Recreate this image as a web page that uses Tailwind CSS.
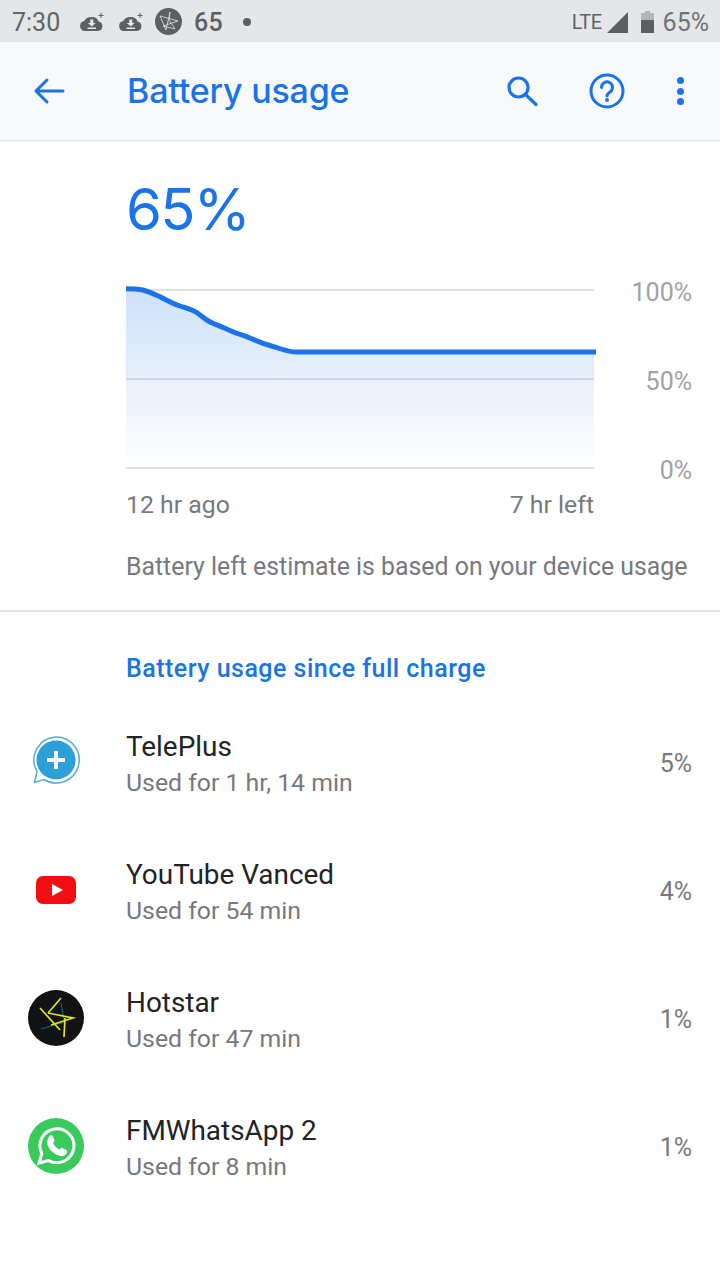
<!DOCTYPE html>
<html>
<head>
<meta charset="utf-8">
<script src="https://cdn.jsdelivr.net/npm/@tailwindcss/browser@4"></script>
</head>
<body class="m-0 bg-white">
<div class="w-[720px] h-[1280px] overflow-hidden bg-white font-['Roboto',sans-serif] flex flex-col">
  <!-- status bar -->
  <div class="h-[42px] bg-[#e5e6e9] flex items-center justify-between pl-[12px] pr-[11px] pt-[2px] shrink-0">
    <div class="flex items-center">
      <span class="text-[25px] leading-none w-[67px] text-[#616468]">7:30</span>
      <svg class="w-[26px] h-[22px] mr-[13px]" viewBox="0 0 26 22"><path fill="#5c5f63" d="M6 20a5 5 0 0 1-.8-9.900A8 7 0 0 1 13 6a7 6 0 0 1 6.500 4.500A4.800 4.800 0 0 1 19 20Z"/><path fill="#e5e6e9" d="M11.200 8.500h3.100v3.500h2.400l-3.950 3.600-3.950-3.600h2.400ZM8.500 16.500h8.500v1.500H8.500Z"/><path fill="none" stroke="#5c5f63" stroke-width="1" d="M22 2v5M19.500 4.500h5"/></svg>
      <svg class="w-[26px] h-[22px] mr-[11px]" viewBox="0 0 26 22"><path fill="#5c5f63" d="M6 20a5 5 0 0 1-.8-9.900A8 7 0 0 1 13 6a7 6 0 0 1 6.500 4.500A4.800 4.800 0 0 1 19 20Z"/><path fill="#e5e6e9" d="M11.200 8.500h3.100v3.500h2.400l-3.950 3.600-3.950-3.600h2.400ZM8.500 16.500h8.500v1.500H8.500Z"/><path fill="none" stroke="#5c5f63" stroke-width="1" d="M22 2v5M19.500 4.500h5"/></svg>
      <svg class="w-[27px] h-[27px] mr-[12px] -mt-[2px]" viewBox="0 0 27 27"><circle cx="13.500" cy="13.500" r="13.500" fill="#5c5f63"/><path fill="none" stroke="#d4d5d8" stroke-width="0.900" d="M15 4 L11 22 L5 8 L23 13 L8 18 L20 21 L14 12 Z"/></svg>
      <span class="text-[25px] leading-none font-medium text-[#5c5f63] tracking-[0.2px] w-[49px]">65</span>
      <span class="w-[8px] h-[8px] rounded-full bg-[#5c5f63]"></span>
    </div>
    <div class="flex items-center">
      <span class="text-[20px] leading-none text-[#5f6368] tracking-[-0.5px] mr-[5px]">LTE</span>
      <svg class="w-[21px] h-[21px] mr-[13px]" viewBox="0 0 21 21"><path fill="#5c5f63" d="M21 0v21H0Z"/></svg>
      <svg class="w-[13px] h-[22px] mr-[9px]" viewBox="0 0 13 22"><path fill="#b4b5b8" d="M4 0h5v2h4v7H0V2h4Z"/><path fill="#5c5f63" d="M0 9h13v13H0Z"/></svg>
      <span class="text-[25px] leading-none text-[#6f7276]">65%</span>
    </div>
  </div>
  <!-- app bar -->
  <div class="h-[98px] bg-[#f8f9fb] flex items-center shrink-0 shadow-[0_1px_2px_rgba(0,0,0,0.15)] relative">
    <svg class="w-[32px] h-[32px] ml-[33px]" viewBox="0 0 32 32"><path fill="none" stroke="#1a73e8" stroke-width="3" stroke-linecap="round" stroke-linejoin="round" d="M3 16h27M14 5 3 16l11 11"/></svg>
    <span class="text-[34px] leading-none text-[#1a73e8] font-medium ml-[62px] tracking-[-0.2px] font-['Inter',sans-serif]">Battery usage</span>
    <svg class="w-[34px] h-[34px] ml-auto" viewBox="0 0 34 34"><circle cx="13.500" cy="13.500" r="9.500" fill="none" stroke="#1a73e8" stroke-width="3.200"/><path stroke="#1a73e8" stroke-width="3.200" stroke-linecap="round" d="M20.500 20.500 31 30.500"/></svg>
    <svg class="w-[36px] h-[36px] ml-[50px]" viewBox="0 0 36 36"><circle cx="18" cy="18" r="16" fill="none" stroke="#1a73e8" stroke-width="3"/><path fill="none" stroke="#1a73e8" stroke-width="3" stroke-linecap="round" d="M12.500 14.500a5.500 5.500 0 1 1 8.500 4.500c-2 1.500-3 2-3 4"/><circle cx="18" cy="27" r="2" fill="#1a73e8"/></svg>
    <div class="flex flex-col gap-[3.500px] ml-[52px] mr-[36px]">
      <span class="block w-[7px] h-[7px] rounded-full bg-[#1a73e8]"></span>
      <span class="block w-[7px] h-[7px] rounded-full bg-[#1a73e8]"></span>
      <span class="block w-[7px] h-[7px] rounded-full bg-[#1a73e8]"></span>
    </div>
  </div>
  <!-- battery -->
  <div class="pl-[126px] pr-[28px] h-[472px] shrink-0 border-b-2 border-[#e4e5e6] flex flex-col">
    <div class="text-[58px] leading-none text-[#1a73e8] mt-[40px] font-['Inter',sans-serif] font-normal tracking-[-1.700px]">65%</div>
    <div class="flex mt-[43px] items-start">
      <svg class="w-[472px] h-[190px] shrink-0" viewBox="0 0 472 190">
        <defs><linearGradient id="g" x1="0" y1="0" x2="0" y2="1"><stop offset="0" stop-color="#cfe1f9"/><stop offset="1" stop-color="#ffffff"/></linearGradient></defs>
        <path fill="url(#g)" d="M0 7.700C8 7.700 12 8 17 9C24 11 28 13 34 15.700C42 20 48 23 54 25C60 27 66 28.500 71 31.700C77 36 80 39.500 87 42.300C95 45 102 49.500 111 52.300C117 54 122 56 127 58.300C133 61 138 63 147 65.500C155 67.500 161 71 170 71H468V187H0Z"/>
        <rect x="0" y="8" width="468" height="2" fill="#e0e1e2"/>
        <rect x="0" y="97" width="468" height="2" fill="#d2d6e2"/>
        <rect x="0" y="186" width="468" height="2" fill="#e0e1e2"/>
        <path fill="none" stroke="#1a73e8" stroke-width="5" d="M0 7.700C8 7.700 12 8 17 9C24 11 28 13 34 15.700C42 20 48 23 54 25C60 27 66 28.500 71 31.700C77 36 80 39.500 87 42.300C95 45 102 49.500 111 52.300C117 54 122 56 127 58.300C133 61 138 63 147 65.500C155 67.500 161 71 170 71H470"/>
      </svg>
      <div class="relative flex-1 h-[190px] text-[25px] leading-none text-[#a0a2a5]">
        <span class="absolute right-0 top-[-1px]">100%</span>
        <span class="absolute right-0 top-[88px]">50%</span>
        <span class="absolute right-0 top-[177px]">0%</span>
      </div>
    </div>
    <div class="flex justify-between w-[468px] text-[24.800px] leading-none text-[#77797c] mt-[22px]">
      <span>12 hr ago</span><span>7 hr left</span>
    </div>
    <div class="text-[24.850px] leading-none text-[#77797c] mt-[37px] whitespace-nowrap">Battery left estimate is based on your device usage</div>
  </div>
  <!-- list -->
  <div class="flex flex-col">
    <div class="pl-[126px] text-[25px] leading-none text-[#1a73e8] font-medium h-[87px] pt-[44px] tracking-[0.48px]">Battery usage since full charge</div>
    <div class="h-[128px] flex items-center pl-[28px] pr-[28px]">
      <div class="w-[98px] shrink-0 -mt-[5px]">
        <svg class="w-[56px] h-[52px]" viewBox="0 0 56 52"><path fill="#fff" stroke="#54aed8" stroke-width="1.500" d="M28 2a23 23 0 1 1-12 42.500L6.500 47.500 9 36.500A23 23 0 0 1 28 2Z"/><circle cx="28" cy="25" r="19.500" fill="#2c9fd9"/><path stroke="#fff" stroke-width="4" d="M19 25h18M28 16v18"/></svg>
      </div>
      <div class="flex-1 pt-[3px]"><div class="text-[27.900px] leading-none text-[#212326]">TelePlus</div><div class="text-[24.800px] leading-none text-[#77797c] mt-[10px]">Used for 1 hr, 14 min</div></div>
      <div class="text-[25px] leading-none text-[#77797c]">5%</div>
    </div>
    <div class="h-[128px] flex items-center pl-[28px] pr-[28px]">
      <div class="w-[98px] shrink-0 -mt-[3px] pl-[8px]">
        <svg class="w-[40px] h-[28px]" viewBox="0 0 40 28"><rect width="40" height="28" rx="7" fill="#f40d12"/><path fill="#fff" d="M16 8l11 6-11 6Z"/></svg>
      </div>
      <div class="flex-1 pt-[3px]"><div class="text-[27.900px] leading-none text-[#212326]">YouTube Vanced</div><div class="text-[24.800px] leading-none text-[#77797c] mt-[10px]">Used for 54 min</div></div>
      <div class="text-[25px] leading-none text-[#77797c]">4%</div>
    </div>
    <div class="h-[128px] flex items-center pl-[28px] pr-[28px]">
      <div class="w-[98px] shrink-0 -mt-[2px]">
        <svg class="w-[56px] h-[56px]" viewBox="0 0 56 56"><circle cx="28" cy="28" r="28" fill="#111214"/><path fill="none" stroke="#12707f" stroke-width="1" d="M33 13 36 30M13 39 37 32"/><path fill="none" stroke="#e6e21c" stroke-width="1.700" d="M33 8 20 23M12 18 32 40M20 23 45 28 23 35M37 28 36 47"/></svg>
      </div>
      <div class="flex-1 pt-[3px]"><div class="text-[27.900px] leading-none text-[#212326]">Hotstar</div><div class="text-[24.800px] leading-none text-[#77797c] mt-[10px]">Used for 47 min</div></div>
      <div class="text-[25px] leading-none text-[#77797c]">1%</div>
    </div>
    <div class="h-[128px] flex items-center pl-[28px] pr-[28px]">
      <div class="w-[98px] shrink-0 -mt-[2px]">
        <svg class="w-[56px] h-[56px]" viewBox="0 0 56 56"><circle cx="28" cy="28" r="28" fill="#38cb5c"/><path fill="none" stroke="#fff" stroke-width="3" d="M11 45l2.800-9.500A17 17 0 1 1 20.500 42.500Z"/><path fill="#fff" d="M21.500 18c1-1 2.500-1 3 0l2 4c.3.800 0 1.500-1.500 3 1 2.500 3.500 5 6.500 6.500 1.500-1.800 2-2 3-1.500l4 2c.8.500.8 1.500.3 3-1 2.500-4 3.500-6.500 3-6-1.200-11.500-6.500-13-12-.6-3 .7-6 2.200-8Z"/></svg>
      </div>
      <div class="flex-1 pt-[3px]"><div class="text-[27.900px] leading-none text-[#212326]">FMWhatsApp 2</div><div class="text-[24.800px] leading-none text-[#77797c] mt-[10px]">Used for 8 min</div></div>
      <div class="text-[25px] leading-none text-[#77797c]">1%</div>
    </div>
  </div>
</div>
</body>
</html>
